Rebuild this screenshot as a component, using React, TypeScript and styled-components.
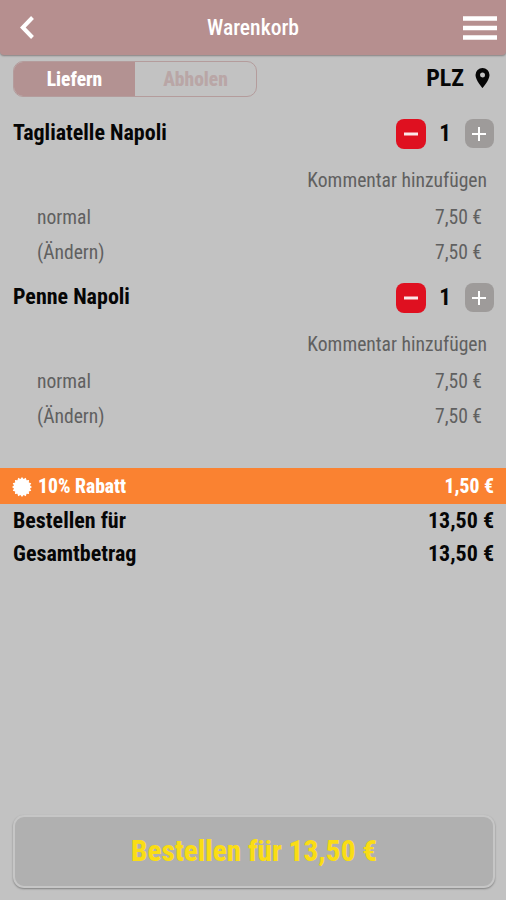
import React from "react";
import styled, { createGlobalStyle } from "styled-components";

const Global = createGlobalStyle`
  *, *::before, *::after { box-sizing: border-box; }
  body { margin: 0; background: #c2c2c2; }
  button { font: inherit; border: 0; padding: 0; margin: 0; background: none; color: inherit; }
  svg { display: block; flex: none; }
`;

const Screen = styled.main`
  display: flex;
  flex-direction: column;
  width: 506px;
  height: 900px;
  overflow: hidden;
  background: #c2c2c2;
  color: #060606;
  font-family: "Roboto Condensed", Roboto, sans-serif;
  font-stretch: 75%;
`;

const Label = styled.span<{ $size: number; $weight?: number }>`
  font-size: ${(p) => p.$size}px;
  font-weight: ${(p) => p.$weight ?? 700};
  line-height: 1;
  white-space: nowrap;
`;

const Header = styled.header`
  display: grid;
  grid-template-columns: 50px 1fr 50px;
  align-items: center;
  flex: none;
  height: 55px;
  padding: 0 9px 0 20px;
  background: #b68f8f;
  color: #fff;
  border-radius: 0 0 4px 4px;
  box-shadow: 0 1px 2px #858080;
  text-align: center;
`;

const Title = styled.h1`
  margin: 0 11px 0 0;
  line-height: 1;
  font-size: 0;
`;

const MenuButton = styled.button`
  justify-self: end;
`;

const Options = styled.section`
  display: flex;
  justify-content: space-between;
  flex: none;
  height: 60px;
  padding: 6px 16px 0 13px;
`;

const Switch = styled.div`
  display: flex;
  width: 244px;
  height: 36px;
  border: 1px solid #b49c9c;
  border-radius: 10px;
  overflow: hidden;
`;

const SwitchOption = styled.button<{ $active?: boolean }>`
  flex: 1;
  padding-top: 2px;
  color: ${(p) => (p.$active ? "#fff" : "#b9a6a6")};
  background: ${(p) => (p.$active ? "#b39292" : "transparent")};
`;

const Postcode = styled.div`
  display: flex;
  align-items: center;
  gap: 11px;
  height: 34px;
`;

const Item = styled.article`
  flex: none;
  height: 164px;
`;

const ItemHead = styled.div`
  display: flex;
  align-items: center;
  justify-content: space-between;
  height: 36px;
  padding: 0 12px 0 13px;
`;

const Stepper = styled.div`
  display: grid;
  grid-template-columns: 30px 38px 30px;
  align-items: center;
  justify-items: center;
  padding-top: 1px;
`;

const StepButton = styled.button<{ $tone: string; $size: number }>`
  display: grid;
  place-items: center;
  width: ${(p) => p.$size}px;
  height: ${(p) => p.$size}px;
  border-radius: 8px;
  background: ${(p) => p.$tone};
`;

const Comment = styled.div`
  display: flex;
  align-items: center;
  justify-content: flex-end;
  height: 48px;
  padding: 12px 19px 0 0;
  color: #606060;
`;

const PriceRow = styled.div`
  display: flex;
  align-items: center;
  justify-content: space-between;
  height: 35.5px;
  padding: 2px 24px 0 37px;
  color: #606060;
`;

const Discount = styled.section`
  display: flex;
  align-items: center;
  flex: none;
  height: 36px;
  margin-top: 25px;
  padding: 1px 12px 0;
  gap: 6px;
  background: #fa8231;
  color: #fff;

  & > :last-child { margin-left: auto; }
`;

const TotalRow = styled.div`
  display: flex;
  align-items: center;
  justify-content: space-between;
  flex: none;
  height: 33px;
  padding: 0 12px 0 13px;
`;

const OrderButton = styled.button`
  flex: none;
  width: 482px;
  height: 73px;
  margin: auto 0 12px 13px;
  padding-top: 1px;
  border: 2px solid #c6c6c6;
  border-radius: 11px;
  background: #b0b0b0;
  box-shadow: 0 1px 2px #808080;
  color: #fadd14;
`;

const sealPoints = Array.from({ length: 32 }, (_, i) => {
  const r = i % 2 ? 8.2 : 10;
  const a = (i * Math.PI) / 16;
  return `${(10 + r * Math.sin(a)).toFixed(2)},${(10 - r * Math.cos(a)).toFixed(2)}`;
}).join(" ");

const items = ["Tagliatelle Napoli", "Penne Napoli"];

function CartItem({ name }: { name: string }) {
  return (
    <Item>
      <ItemHead>
        <Label $size={22}>{name}</Label>
        <Stepper>
          <StepButton $tone="#df1020" $size={30} aria-label="Weniger">
            <svg width="14" height="14" viewBox="0 0 14 14">
              <path d="M0 7H14" stroke="#fff" strokeWidth="3" opacity=".9" />
            </svg>
          </StepButton>
          <Label $size={23}>1</Label>
          <StepButton $tone="#9e9b9a" $size={29} aria-label="Mehr">
            <svg width="14" height="14" viewBox="0 0 14 14">
              <path d="M0 7H14M7 0V14" stroke="#fff" strokeWidth="2" />
            </svg>
          </StepButton>
        </Stepper>
      </ItemHead>
      <Comment><Label $size={19.6} $weight={400}>Kommentar hinzufügen</Label></Comment>
      {["normal", "(Ändern)"].map((text) => (
        <PriceRow key={text}>
          <Label $size={19.6} $weight={400}>{text}</Label>
          <Label $size={19.6} $weight={400}>7,50 €</Label>
        </PriceRow>
      ))}
    </Item>
  );
}

export default function App() {
  return (
    <Screen>
      <Global />
      <Header>
        <button aria-label="Zurück">
          <svg width="15" height="23" viewBox="0 0 15 23">
            <path d="M12.5 1.5L2.8 11.5L12.5 21.5" fill="none" stroke="#fff" strokeWidth="4" />
          </svg>
        </button>
        <Title><Label $size={21.6} $weight={500}>Warenkorb</Label></Title>
        <MenuButton aria-label="Menü">
          <svg width="34" height="24" viewBox="0 0 34 24">
            <path d="M0 2.5H34M0 12H34M0 21.5H34" stroke="#fff" strokeWidth="4.4" />
          </svg>
        </MenuButton>
      </Header>
      <Options>
        <Switch>
          <SwitchOption $active><Label $size={19.5} $weight={800}>Liefern</Label></SwitchOption>
          <SwitchOption><Label $size={19.5} $weight={800}>Abholen</Label></SwitchOption>
        </Switch>
        <Postcode>
          <Label $size={24}>PLZ</Label>
          <svg width="15" height="20" viewBox="0 0 14 20">
            <path fillRule="evenodd" fill="#060606" d="M7 0a7 7 0 0 0-7 7c0 5.2 7 13 7 13s7-7.8 7-13a7 7 0 0 0-7-7zm0 4.5a2.5 2.5 0 1 1 0 5 2.5 2.5 0 0 1 0-5z" />
          </svg>
        </Postcode>
      </Options>
      {items.map((name) => <CartItem key={name} name={name} />)}
      <Discount>
        <svg width="20" height="20" viewBox="0 0 20 20"><polygon points={sealPoints} fill="#fff" /></svg>
        <Label $size={19.6} $weight={800}>10% Rabatt</Label>
        <Label $size={19.6} $weight={800}>1,50 €</Label>
      </Discount>
      <TotalRow><Label $size={22}>Bestellen für</Label><Label $size={22}>13,50 €</Label></TotalRow>
      <TotalRow><Label $size={22}>Gesamtbetrag</Label><Label $size={22}>13,50 €</Label></TotalRow>
      <OrderButton><Label $size={29.2} $weight={800}>Bestellen für 13,50 €</Label></OrderButton>
    </Screen>
  );
}
